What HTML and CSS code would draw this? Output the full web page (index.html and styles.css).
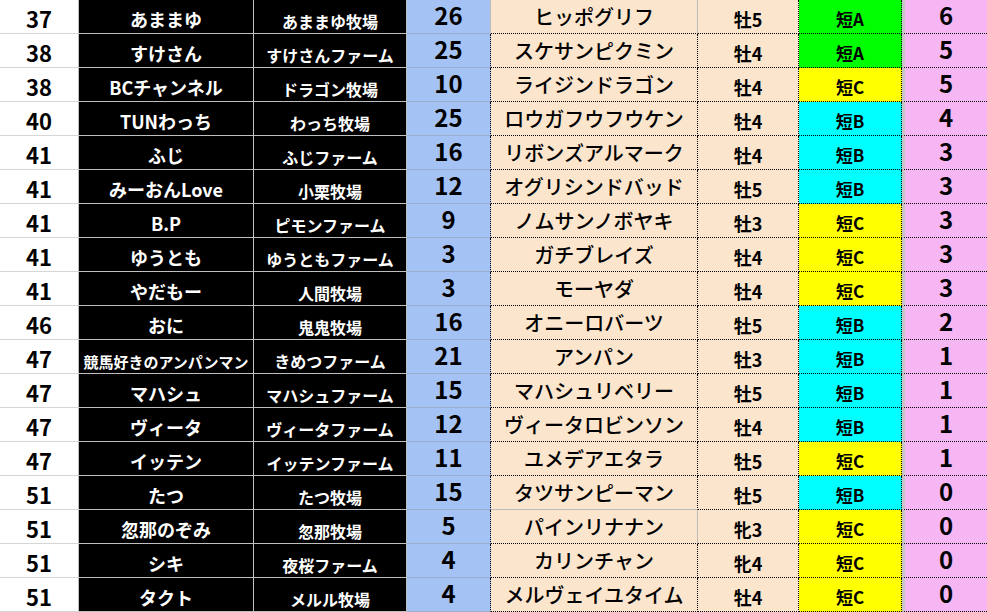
FILE: index.html
```html
<!DOCTYPE html>
<html lang="ja">
<head>
<meta charset="utf-8">
<title>ランキング</title>
<link rel="stylesheet" href="styles.css">
</head>
<body>
<div class="sheet">
  <div class="row first"><div class="c c1">37</div><div class="c c2">あままゆ</div><div class="c c3">あままゆ牧場</div><div class="c c4">26</div><div class="c c5">ヒッポグリフ</div><div class="c c6">牡5</div><div class="c c7 g">短A</div><div class="c c8">6</div></div>
  <div class="row"><div class="c c1">38</div><div class="c c2">すけさん</div><div class="c c3">すけさんファーム</div><div class="c c4">25</div><div class="c c5">スケサンピクミン</div><div class="c c6">牡4</div><div class="c c7 g">短A</div><div class="c c8">5</div></div>
  <div class="row"><div class="c c1">38</div><div class="c c2">BCチャンネル</div><div class="c c3">ドラゴン牧場</div><div class="c c4">10</div><div class="c c5">ライジンドラゴン</div><div class="c c6">牡4</div><div class="c c7 y">短C</div><div class="c c8">5</div></div>
  <div class="row"><div class="c c1">40</div><div class="c c2">TUNわっち</div><div class="c c3">わっち牧場</div><div class="c c4">25</div><div class="c c5">ロウガフウフウケン</div><div class="c c6">牡4</div><div class="c c7 b">短B</div><div class="c c8">4</div></div>
  <div class="row"><div class="c c1">41</div><div class="c c2">ふじ</div><div class="c c3">ふじファーム</div><div class="c c4">16</div><div class="c c5">リボンズアルマーク</div><div class="c c6">牡4</div><div class="c c7 b">短B</div><div class="c c8">3</div></div>
  <div class="row"><div class="c c1">41</div><div class="c c2">みーおんLove</div><div class="c c3">小栗牧場</div><div class="c c4">12</div><div class="c c5">オグリシンドバッド</div><div class="c c6">牡5</div><div class="c c7 b">短B</div><div class="c c8">3</div></div>
  <div class="row"><div class="c c1">41</div><div class="c c2">B.P</div><div class="c c3">ピモンファーム</div><div class="c c4">9</div><div class="c c5">ノムサンノボヤキ</div><div class="c c6">牡3</div><div class="c c7 y">短C</div><div class="c c8">3</div></div>
  <div class="row"><div class="c c1">41</div><div class="c c2">ゆうとも</div><div class="c c3">ゆうともファーム</div><div class="c c4">3</div><div class="c c5">ガチブレイズ</div><div class="c c6">牡4</div><div class="c c7 y">短C</div><div class="c c8">3</div></div>
  <div class="row"><div class="c c1">41</div><div class="c c2">やだもー</div><div class="c c3">人間牧場</div><div class="c c4">3</div><div class="c c5">モーヤダ</div><div class="c c6">牡4</div><div class="c c7 y">短C</div><div class="c c8">3</div></div>
  <div class="row"><div class="c c1">46</div><div class="c c2">おに</div><div class="c c3">鬼鬼牧場</div><div class="c c4">16</div><div class="c c5">オニーロバーツ</div><div class="c c6">牡5</div><div class="c c7 b">短B</div><div class="c c8">2</div></div>
  <div class="row"><div class="c c1">47</div><div class="c c2 small">競馬好きのアンパンマン</div><div class="c c3">きめつファーム</div><div class="c c4">21</div><div class="c c5">アンパン</div><div class="c c6">牡3</div><div class="c c7 b">短B</div><div class="c c8">1</div></div>
  <div class="row"><div class="c c1">47</div><div class="c c2">マハシュ</div><div class="c c3">マハシュファーム</div><div class="c c4">15</div><div class="c c5">マハシュリベリー</div><div class="c c6">牡5</div><div class="c c7 b">短B</div><div class="c c8">1</div></div>
  <div class="row"><div class="c c1">47</div><div class="c c2">ヴィータ</div><div class="c c3">ヴィータファーム</div><div class="c c4">12</div><div class="c c5">ヴィータロビンソン</div><div class="c c6">牡4</div><div class="c c7 b">短B</div><div class="c c8">1</div></div>
  <div class="row"><div class="c c1">47</div><div class="c c2">イッテン</div><div class="c c3">イッテンファーム</div><div class="c c4">11</div><div class="c c5">ユメデアエタラ</div><div class="c c6">牡5</div><div class="c c7 y">短C</div><div class="c c8">1</div></div>
  <div class="row before-solid"><div class="c c1">51</div><div class="c c2">たつ</div><div class="c c3">たつ牧場</div><div class="c c4">15</div><div class="c c5">タツサンピーマン</div><div class="c c6">牡5</div><div class="c c7 b">短B</div><div class="c c8">0</div></div>
  <div class="row solid-right"><div class="c c1">51</div><div class="c c2">忽那のぞみ</div><div class="c c3">忽那牧場</div><div class="c c4">5</div><div class="c c5">パインリナナン</div><div class="c c6">牝3</div><div class="c c7 y">短C</div><div class="c c8">0</div></div>
  <div class="row"><div class="c c1">51</div><div class="c c2">シキ</div><div class="c c3">夜桜ファーム</div><div class="c c4">4</div><div class="c c5">カリンチャン</div><div class="c c6">牝4</div><div class="c c7 y">短C</div><div class="c c8">0</div></div>
  <div class="row"><div class="c c1">51</div><div class="c c2">タクト</div><div class="c c3">メルル牧場</div><div class="c c4">4</div><div class="c c5">メルヴェイユタイム</div><div class="c c6">牡4</div><div class="c c7 y">短C</div><div class="c c8">0</div></div>
</div>
</body>
</html>
```
FILE: styles.css
```css
html, body {
  margin: 0;
  padding: 0;
  background: #ffffff;
  overflow: hidden;
}
body {
  font-family: "Noto Sans CJK JP", "Noto Sans", sans-serif;
  color: #000;
}
.sheet {
  width: 987px;
  display: flex;
  flex-direction: column;
}
.row {
  display: grid;
  grid-template-columns: 79px 175px 153px 84px 207px 101px 103px 85px;
  height: 34px;
}
.c {
  box-sizing: border-box;
  height: 34px;
  display: flex;
  justify-content: center;
  align-items: flex-start;
  white-space: nowrap;
  font-weight: 700;
  border-bottom: 1px solid #c8c8c8;
  border-right: 1px solid #c0c0c0;
}
.c1 {
  background: #ffffff;
  font-size: 22px;
  line-height: 26px;
  padding-top: 5px;
  border-bottom-color: #d6d6d6;
  border-right: 1px solid #bdbdbd;
}
.c2, .c3 {
  background: #000000;
  color: #ffffff;
  border-bottom-color: #bfbfbf;
  border-right-color: #bfbfbf;
}
.c2 {
  font-size: 18px;
  line-height: 22px;
  padding-top: 8px;
}
.c2.small {
  font-size: 15px;
  line-height: 19px;
  padding-top: 12px;
}
.c3 {
  font-size: 16px;
  line-height: 20px;
  padding-top: 11px;
}
.c4 {
  background: #a4c2f4;
  font-size: 24px;
  line-height: 29px;
  padding-top: 0;
  border-bottom: 1px solid #9aaccc;
  border-right: 1px dotted #000;
}
.c5, .c6 {
  background: #fce5cd;
  border-bottom: 1px dotted #000;
  border-right: 1px dotted #000;
}
.c5 {
  font-size: 20px;
  line-height: 24px;
  font-weight: 500;
  padding-top: 5px;
}
.c6 {
  font-size: 18px;
  line-height: 22px;
  padding-top: 8px;
}
.c7 {
  font-size: 17px;
  line-height: 21px;
  padding-top: 8px;
  border-bottom: 1px dotted #000;
  border-right: 1px dotted #000;
}
.c7.g { background: #00ff00; }
.c7.y { background: #ffff00; }
.c7.b { background: #00ffff; }
.c8 {
  background: #f6b6f3;
  font-size: 24px;
  line-height: 29px;
  padding-top: 0;
  border-bottom: 1px dotted #000;
  border-right: none;
  border-left: 3px solid #c6c6c6;
}
.first .c4,
.first .c5 {
  border-right: 1px solid #bcbcbc;
}
.before-solid .c5 {
  border-bottom: 1px solid #bcbcbc;
}
.solid-right .c5 {
  border-right: 1px solid #bcbcbc;
}
```
